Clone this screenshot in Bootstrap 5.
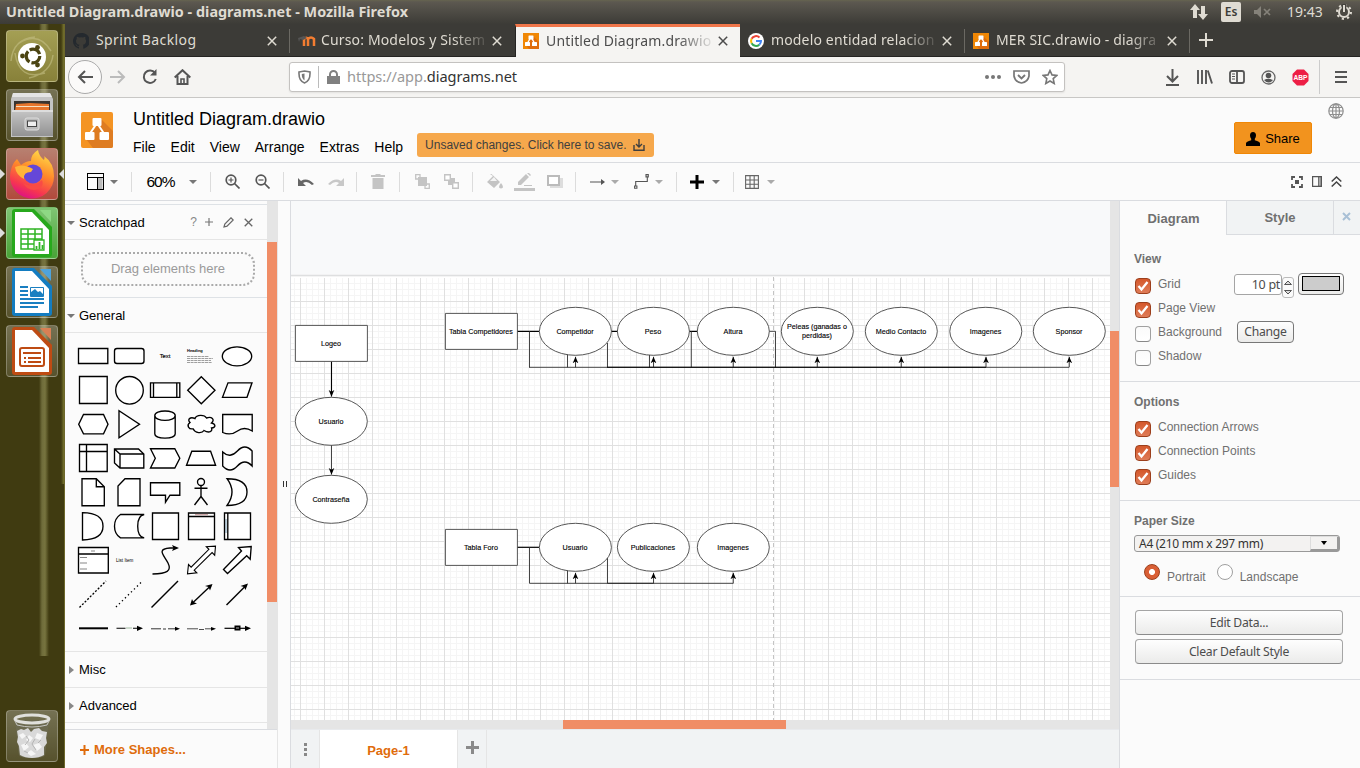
<!DOCTYPE html>
<html lang="es">
<head>
<meta charset="utf-8">
<meta name="viewport" content="width=device-width, initial-scale=1">
<title>Untitled Diagram.drawio - diagrams.net</title>
<link href="https://cdn.jsdelivr.net/npm/bootstrap@5.3.0/dist/css/bootstrap.min.css" rel="stylesheet">
<style>
body{width:1360px;height:768px;font-family:"Liberation Sans",Arial,sans-serif;font-size:13px;line-height:1.2;color:#000;background:#fbfbfb}
svg{display:block;flex:none}
.ub{font-family:"Noto Sans","Open Sans",sans-serif}
/* desktop panel */
.panel{height:24px;background:linear-gradient(#66644f 0,#5c5850 2px,#3f3e39 22px,#3c3b37);color:#dfdbd2;font-size:14px}
.panel-title{font-weight:700;font-size:14.4px;letter-spacing:.01px;padding-left:6px}
.panel-right{grid-template-columns:32px 32px 32px 52px 26px;display:grid;justify-items:center;padding-right:3px}
.lang{width:20px;height:20px;background:#dfdbd2;color:#3c3b37;border-radius:2px;font-size:12px;font-weight:600}
/* launcher */
.dock{width:65px;background:linear-gradient(90deg,transparent 61px,#77742f 64px,#b5ad45 65px) 0 0/65px 460px no-repeat,linear-gradient(90deg,transparent 39px,#6f6c3b 42px,#77743f 45px,transparent 49px) 0 0/65px 632px no-repeat,#403b11;padding:6px 0 6px 6px;border-right:1px solid #6d682b}
.tile{width:52px;height:52px;border-radius:4px;border:1px solid rgba(255,255,255,.25);background:linear-gradient(rgba(255,255,255,.28),rgba(255,255,255,.12));position:relative}
.tile.olive{background:linear-gradient(#a49f54,#88813a)}
.tile.red{background:linear-gradient(#b78070,#b14a3c)}
.tile.green{background:linear-gradient(#7fc573,#49a337)}
.pip{position:absolute;top:20px}
/* browser */
.tabs{height:33px;background:#3c3b37;border-bottom:1px solid #252422;color:#dfdbd2;font-size:14px}
.btab{width:225px;padding:1px 13px 0 8px;position:relative}
.btab .lbl{white-space:nowrap;letter-spacing:.15px;-webkit-mask-image:linear-gradient(90deg,#000 132px,transparent 170px)}
.btab.nomask .lbl{-webkit-mask-image:none;letter-spacing:.4px}
.btab.split{background:linear-gradient(#6b6963,#6b6963) right 5px/1px 24px no-repeat}
.btab.on{background:#f5f4f2;color:#4c4c4c;height:33px;border-top:3px solid #f0764a;border-left:1px solid #252422;padding:0 12px 2px 7px}
.nav-row{height:41px;background:#f5f4f2;border-bottom:1px solid #c8c7c5;display:grid;grid-template-columns:40px 26px 38px 26px 94px 776px 91px 32px 33px 31px 32px 32px 6px 38px;align-items:center;justify-items:center}
.back{width:34px;height:34px;border:1px solid #aaa;border-radius:50%;background:#fbfaf9}
.url{width:776px;height:30px;border:1px solid #c4c2c0;border-radius:3px;background:#fff;font-size:14.6px;letter-spacing:-.05px;color:#999;padding:0 6px 0 8px;box-shadow:0 1px 2px rgba(0,0,0,.08)}
.url b{font-weight:400;color:#333}
.url .sp{width:1px;height:22px;background:#bbb}
/* editor header */
.head{height:65px;border-bottom:1px solid #dadce0}
.doc{font-size:18px;line-height:22px}
.menus{font-size:14px;gap:15px;line-height:24px}
.unsaved{background:#f6a84c;color:#3f3f3f;border-radius:3px;height:24px;font-size:12px;padding:0 9px 0 8px;letter-spacing:0;width:237px}
.share{width:78px;height:32px;background:#f2931e;border:1px solid #f08705;border-radius:2px;font-size:13px;padding-top:2px}
.toolrow{height:38px;border-bottom:1px solid #dadce0;background:#fbfbfb;position:relative}
.tools{display:grid;grid-template-columns:30px 8px 26px 33px 32px 3px 41px 19px 23px 21px 40px 1px 42px 1px 44px 15px 27px 17px 43px 18px 23px 35px 53px 3px 54px 3px 50px;align-items:center;justify-items:center;height:37px;margin-left:15px}
.tools i{width:1px;height:20px;background:#dcdcdc}
.caret{width:0;height:0;border:4px solid transparent;border-top-color:#777;border-bottom:0}
.caret.lt{border-top-color:#aaa}
/* sidebar */
.side{width:213px;border-right:1px solid #e5e5e5}
.shapes{width:202px;border-right:0;margin-top:3px}
.sect{height:35px;font-size:13px;border-bottom:1px solid #e5e5e5;padding:1px 0 0 2px;flex:none}
.sect .tri{width:12px}
.dropzone{width:174px;height:34px;border:2px dotted #aaa;border-radius:12px;color:#9a9a9a;font-size:13px}
.palette{display:grid;grid-template-columns:repeat(5,36px);grid-auto-rows:34px;padding:6px 0 6px 10px;height:319px;border-bottom:1px solid #e5e5e5}
.palette svg{width:36px;height:34px;fill:#fff;stroke:#000;stroke-width:1.35}
.palette .txt{fill:#000;stroke:none}
.vbar{width:10px;background:#e5e5e5}
.vthumb{background:#f08d66}
.more{height:39px;border-top:1px solid #dadce0;color:#df6c0c;font-weight:700;font-size:13px;padding:2px 0 0 15px}
.split-bar{width:12px}
.work{width:829px;border-left:1px solid #dadce0}
.hbar{height:9px;background:#e5e5e5;padding-left:272px}
.pages{height:39px;background:#f1f3f4;border-top:1px solid #e8eaed;color:#df6c0c}
.pages>div{border-right:1px solid #e5e5e5}
/* format panel */
.fmt{width:241px;border-left:1px solid #dadce0;color:#707070;font-size:12px}
.ftab{height:34px;background:#f1f3f4;border-left:1px solid #dadce0;border-bottom:1px solid #dadce0;font-size:13px;font-weight:700}
.ftab.on{background:#fbfbfb;border-color:transparent;padding-top:2px}
.blk{border-bottom:1px solid #dadce0;padding-left:14px}
.blk h6{font-size:12px;font-weight:700;margin:0;height:26px;line-height:26px}
.opt{height:24px;gap:7px;padding-left:1px}
.ck{width:16px;height:16px;border-radius:4px;border:1px solid #a0a0a0;border-bottom-color:#888;background:linear-gradient(#fafafa,#fff);margin-top:4px}
.ck.on{background:linear-gradient(#d4582b,#df7c58);border-color:#9c3f1c}
.gtk{border:1px solid #a5a5a5;border-bottom-color:#8b8b8b;border-radius:4px;background:linear-gradient(#fefefe,#ebebea);color:#4c4c4c;font-size:12.2px;letter-spacing:-.26px;padding:1px 0 0}
.wide{width:208px;height:25px;margin-left:1px}
.num{width:48px;height:21px;background:#fff;border:1px solid #a5a5a5;border-radius:3px;color:#4c4c4c;font-size:12.5px;letter-spacing:-.3px;padding:2px 1px 0 0}
.spin{width:12px;height:21px;border:1px solid #bbb;border-radius:3px;margin-top:7px}
.rad{width:16px;height:16px;border-radius:50%;border:1px solid #a0a0a0;background:#fff}
.rad.on{border-color:#9c3f1c;background:radial-gradient(#fff 2.6px,#d95f35 3.4px)}
.sel{width:206px;height:17px;border:1px solid #999;border-radius:3px;background:#f3f2f1;color:#333;font-size:12px;letter-spacing:-.29px;padding-left:4px}
.sel span:last-child{width:29px;height:15px;border:1px solid #ddd;border-right:2px solid #999;border-bottom:2px solid #999}
</style>
<script src="https://cdn.jsdelivr.net/npm/bootstrap@5.3.0/dist/js/bootstrap.bundle.min.js"></script>
</head>
<body class="overflow-hidden d-flex flex-column">
<svg width="0" height="0" class="position-absolute">
  <defs>
    <symbol id="drawio" viewBox="0 0 32 36"><rect width="32" height="36" rx="2" fill="#f49424"/><path d="M19 6l13 13v15q0 2-2 2H12l-7-9 10-12z" fill="#de7c22"/><path d="M16 11l-8 12M16 11l8 12" stroke="#fff" stroke-width="2"/><rect x="11.500" y="6" width="9" height="8" rx="1" fill="#fff"/><rect x="4" y="20" width="9.500" height="8" rx="1" fill="#fff"/><rect x="18.500" y="20" width="9.500" height="8" rx="1" fill="#fff"/></symbol>
    <symbol id="favdio" viewBox="0 0 16 16"><rect width="16" height="16" fill="#f08705"/><path d="M10 3l6 6v7H6l-3-4 5-6z" fill="#df6c0c"/><path d="M8 4l-4 7M8 4l4 7" stroke="#fff" stroke-width="1.400"/><rect x="5.500" y="2.500" width="5" height="4" rx=".6" fill="#fff"/><rect x="2" y="9" width="5" height="4" rx=".6" fill="#fff"/><rect x="9" y="9" width="5" height="4" rx=".6" fill="#fff"/></symbol>
    <symbol id="x" viewBox="0 0 10 10"><path d="M.8.8l8.400 8.400M9.200.8L.8 9.200" stroke="currentColor" stroke-width="1.500"/></symbol>
    <symbol id="tick" viewBox="0 0 14 14"><path d="M2.500 7l3 3.500 6-7.500" fill="none" stroke="#fff" stroke-width="2.300"/></symbol>
    <marker id="ah" viewBox="0 0 8 8" refX="7.300" refY="4" markerWidth="7" markerHeight="7" markerUnits="userSpaceOnUse" orient="auto"><path d="M0 .8L7.500 4 0 7.200 1.800 4z"/></marker>
  </defs>
</svg>

<header class="panel d-flex align-items-center justify-content-between flex-shrink-0 ub">
  <div class="panel-title text-nowrap">Untitled Diagram.drawio - diagrams.net - Mozilla Firefox</div>
  <div class="panel-right align-items-center">
    <svg width="18" height="18" fill="#dfdbd2"><path d="M5 1l5 6H7v8H3V7H0zM13 17l-5-6h3V3h4v8h3z"/></svg>
    <span class="lang d-flex align-items-center justify-content-center">Es</span>
    <svg width="18" height="12" fill="#85827a"><path d="M0 4h3l4-4v12L3 8H0z"/><path d="M10 3l6 6m0-6l-6 6" stroke="#85827a" stroke-width="1.700"/></svg>
    <span>19:43</span>
    <svg width="16" height="16" viewBox="0 0 16 16" fill="none" stroke="#dfdbd2"><circle cx="8" cy="8" r="5" stroke-width="2"/><circle cx="8" cy="8" r="7" stroke-width="2" stroke-dasharray="2.200 3.300"/><path d="M8 0v8" stroke="#45433e" stroke-width="4.500"/><path d="M8 1v7" stroke-width="2"/></svg>
  </div>
</header>

<div class="d-flex flex-grow-1">
<nav class="dock d-flex flex-column flex-shrink-0">
  <div class="d-flex flex-column" style="gap:7px">
    <div class="tile olive"><svg width="50" height="50" viewBox="0 0 50 50"><path d="M4 30Q6 8 28 6M46 24q-2 18-24 23M12 12q20-12 32 8M38 42Q12 50 8 22" fill="none" stroke="#c4bf86" stroke-opacity=".6" stroke-width="1.500"/><circle cx="25" cy="26" r="14" fill="#fff"/><circle cx="26" cy="25" r="6.800" fill="none" stroke="#4b4412" stroke-width="3.200" stroke-dasharray="12.200 2"/><g fill="#4b4412"><circle cx="15.500" cy="25" r="2.400"/><circle cx="30.500" cy="16.500" r="2.400"/><circle cx="30.500" cy="34" r="2.400"/></g></svg></div>
    <div class="tile"><svg width="50" height="50" viewBox="0 0 50 50"><defs><linearGradient id="cab" x1="0" y1="0" x2="0" y2="1"><stop stop-color="#c6c6c6"/><stop offset="1" stop-color="#929292"/></linearGradient></defs><path d="M6 3h37l3 6v38H4V9z" fill="#c4c4c4"/><path d="M6 3h37l2 4H5z" fill="#e4e4e4"/><path d="M7 11h36v10H7z" fill="#3a3530"/><path d="M9 14l14-1 19 1v7H8z" fill="#e8762c"/><path d="M9 16.500h33" stroke="#f6dfc0"/><path d="M5 20h41v26H5z" fill="url(#cab)"/><path d="M5 20h41v2H5z" fill="#ddd"/><rect x="18" y="28" width="14" height="12" rx="2" fill="#bbb" stroke="#ddd"/><rect x="20.500" y="31" width="9" height="5.500" fill="#eee" stroke="#444"/></svg></div>
    <div class="tile red"><svg width="50" height="50" viewBox="0 0 50 50"><defs><linearGradient id="ff" x1=".8" y1="0" x2=".4" y2="1"><stop stop-color="#ffe14a"/><stop offset=".45" stop-color="#ff8a2a"/><stop offset=".8" stop-color="#f7374f"/><stop offset="1" stop-color="#e01580"/></linearGradient></defs><path d="M10 10l4 6q5-4 10-4 0-7 7-11 1 6 6 10 1-3 0-4 10 7 10 20A22 22 0 1 1 4 21q1-6 6-11z" fill="url(#ff)"/><circle cx="26" cy="25" r="9.500" fill="#6547d8"/><path d="M8 18q8-4 18 2l-2 3q-8 0-7 7-8-4-9-12z" fill="#ffb43a"/><path d="M16 34q10 6 19-3 3 8-8 10-7 0-11-7z" fill="#f94b46"/></svg>
      <svg class="pip" style="left:-7px" width="5" height="10" fill="#ddd"><path d="M0 0l5 5-5 5z"/></svg><svg class="pip" style="left:51px" width="6" height="10" fill="#ddd"><path d="M6 0L1 5l5 5z"/></svg></div>
    <div class="tile green"><svg width="50" height="50" viewBox="0 0 50 50"><path d="M8 1h19l18 18v27q0 3-3 3H8q-3 0-3-3V4q0-3 3-3z" fill="#27a81c"/><path d="M33 2h11v12z" fill="#8ed884"/><path d="M8 4h17l17 18v24H8z" fill="#fff"/><path d="M14 21h21v20H14zM14 26h21M14 31h21M14 36h21M21 21v20M28 21v20" fill="none" stroke="#2fb423" stroke-width="1.500"/><path d="M27 32h10v10H27z" fill="#fff" stroke="#2fb423" stroke-width="1.300"/><path d="M29.500 41v-3m3 3v-7m3 7v-4" stroke="#2fb423" stroke-width="1.800"/></svg>
      <svg class="pip" style="left:-7px" width="5" height="10" fill="#ddd"><path d="M0 0l5 5-5 5z"/></svg></div>
    <div class="tile"><svg width="50" height="50" viewBox="0 0 50 50"><path d="M8 1h19l18 18v27q0 3-3 3H8q-3 0-3-3V4q0-3 3-3z" fill="#137cc0"/><path d="M33 2h11v12z" fill="#4ea3dc"/><path d="M8 4h17l17 18v24H8z" fill="#fff"/><path d="M13 20h8M13 24h8M13 28h8M13 32h24M13 36h24M13 40h18" stroke="#1a7fc1" stroke-width="1.900"/><path d="M23.500 20.500h13v9h-13z" fill="#fff" stroke="#1a7fc1"/><path d="M24 29v-4l4-3 3 3 2-1 3 3v2z" fill="#1a7fc1"/></svg></div>
    <div class="tile"><svg width="50" height="50" viewBox="0 0 50 50"><path d="M8 1h19l18 18v27q0 3-3 3H8q-3 0-3-3V4q0-3 3-3z" fill="#be4b13"/><path d="M33 2h11v12z" fill="#d98054"/><path d="M8 4h17l17 18v24H8z" fill="#fff"/><rect x="13" y="22" width="24" height="18" rx="2" fill="none" stroke="#be4b13" stroke-width="2"/><path d="M16 27h18M17 32h2m2 0h13M17 36h2m2 0h13" stroke="#be4b13" stroke-width="1.800"/></svg></div>
  </div>
  <div class="tile mt-auto"><svg width="50" height="50" viewBox="0 0 50 50"><path d="M8 9l4 35q1 3 13 3t13-3l4-35z" fill="#6c6a50"/><path d="M10 20l4-2 3 1 4-2 3 4 3-3 5-1 3 3 5 1-1 6 1 5-3 4v8q-5 3-12 3t-12-3l-1-9-2-4 1-5z" fill="#d9d9d9"/><path d="M12 24l4-2 3 3-4 3zM22 24l4 3-3 4-4-2zM30 22l6 2-3 5-5-2zM14 34l5-2 3 4-5 4zM26 34l6-2 3 4-5 4zM20 42l4-3 5 4-5 2z" fill="#f6f6f6"/><path d="M19 25l3 4-4 5M28 28l-3 5 4 6M34 29l-3 3M17 40l4 2" fill="none" stroke="#b4b4b4"/><ellipse cx="25" cy="8" rx="17" ry="4" fill="none" stroke="#e0e0dc" stroke-width="3"/><path d="M8 10l2 4q15 4 30 0l2-4" fill="none" stroke="#c4c4c0"/></svg></div>
</nav>

<main class="flex-grow-1 d-flex flex-column">
  <div class="tabs d-flex flex-shrink-0 ub">
    <div class="btab split nomask d-flex align-items-center"><svg width="16" height="16" viewBox="0 0 16 16" fill="#24292e"><path d="M8 0a8 8 0 0 0-2.500 15.600c.4 0 .5-.2.500-.4v-1.500c-2 .4-2.700-1-2.900-1.400-.4-.7-1-.9-.4-1 .8 0 1.300 1.200 1.600 1.400.6.500 1.200.3 1.700.1l.5-1C4.300 11.500 3 10.500 3 8c0-1 .3-1.500.8-2.100-.2-.6-.2-1.400.1-2.200.8 0 1.500.4 2.200.9a8 8 0 0 1 4 0c.7-.5 1.300-.9 2.100-.9.300.8.300 1.600.1 2.200.5.600.8 1.200.8 2.100 0 2.500-1.500 3.500-3.300 3.700.3.200.5.700.5 1.400v2.200c0 .2.100.4.500.4A8 8 0 0 0 8 0z"/></svg><span class="lbl flex-grow-1" style="margin-left:7px">Sprint Backlog</span><svg class="ms-1" width="10" height="10"><use href="#x"/></svg></div>
    <div class="btab d-flex align-items-center"><svg width="18" height="16" viewBox="0 0 18 16"><path d="M6 13V6q2.500-2.500 4 0v7m0-7q3-3 6 0v7" fill="none" stroke="#f47d31" stroke-width="2.500"/><path d="M0 5l6-2 3 2-4 2-3-1-1 3z" fill="#555"/></svg><span class="lbl flex-grow-1" style="margin-left:5px">Curso: Modelos y Sistem</span><svg class="ms-1" width="10" height="10"><use href="#x"/></svg></div>
    <div class="btab on d-flex align-items-center"><svg width="16" height="16"><use href="#favdio"/></svg><span class="lbl flex-grow-1" style="margin-left:7px">Untitled Diagram.drawio</span><svg class="ms-1" width="10" height="10"><use href="#x"/></svg></div>
    <div class="btab split d-flex align-items-center"><svg width="16" height="16" viewBox="0 0 16 16"><circle cx="8" cy="8" r="8" fill="#fff"/><g fill="none" stroke-width="2"><path d="M11.500 4.500A5 5 0 0 0 3.600 5.800" stroke="#ea4335"/><path d="M3.600 5.800a5 5 0 0 0 0 4.500" stroke="#fbbc05"/><path d="M3.600 10.300a5 5 0 0 0 7.700 1.400" stroke="#34a853"/><path d="M11.300 11.700A5 5 0 0 0 13 8H8" stroke="#4285f4"/></g></svg><span class="lbl flex-grow-1" style="margin-left:7px">modelo entidad relacion</span><svg class="ms-1" width="10" height="10"><use href="#x"/></svg></div>
    <div class="btab split d-flex align-items-center"><svg width="16" height="16"><use href="#favdio"/></svg><span class="lbl flex-grow-1" style="margin-left:7px">MER SIC.drawio - diagra</span><svg class="ms-1" width="10" height="10"><use href="#x"/></svg></div>
    <svg class="mt-2" style="margin-left:9px" width="14" height="15" stroke="#dfdbd2" stroke-width="2"><path d="M0 8h14M7 1v14"/></svg>
  </div>

  <div class="nav-row flex-shrink-0">
    <div class="back d-flex align-items-center justify-content-center"><svg width="16" height="14" fill="none" stroke="#555" stroke-width="2"><path d="M16 7H2M8 1L2 7l6 6"/></svg></div>
    <svg width="16" height="14" fill="none" stroke="#bbb" stroke-width="2"><path d="M0 7h14M8 1l6 6-6 6"/></svg>
    <svg width="16" height="16" fill="none" stroke="#555" stroke-width="2"><path d="M13.800 10A6.200 6.200 0 1 1 13 4"/><path d="M14.500 0v6.500H8z" fill="#555" stroke="none"/></svg>
    <svg width="17" height="16" fill="none" stroke="#555" stroke-width="2"><path d="M.7 8.500l7.800-7.300 7.800 7.300M3.500 7v8h10V7"/><path d="M7 15v-5h3v5" stroke-width="1.600"/></svg>
    <span></span>
    <div class="url ub d-flex align-items-center">
      <svg width="13" height="14" fill="none" stroke="#777" stroke-width="1.600"><path d="M1 2l5.500-1L12 2q.5 9-5.500 11Q.5 11 1 2z"/><path d="M6.500 3.500v7Q3.500 8 3.800 4z" fill="#777" stroke="none"/></svg>
      <span class="sp" style="margin-left:7px"></span>
      <svg style="margin-left:8px" width="13" height="14" fill="#808080"><path d="M0 6h13v8H0z"/><path d="M3 7V4.500a3.500 3.500 0 0 1 7 0V7" fill="none" stroke="#808080" stroke-width="2"/></svg>
      <span class="flex-grow-1" style="margin-left:7px">https://app.<b>diagrams.net</b></span>
      <svg width="16" height="4" fill="#777"><circle cx="2" cy="2" r="2"/><circle cx="8" cy="2" r="2"/><circle cx="14" cy="2" r="2"/></svg>
      <svg style="margin-left:12px" width="17" height="14" fill="none" stroke="#777" stroke-width="1.700"><path d="M1 1h15v5q-1 6-7.500 7Q2 12 1 6z"/><path d="M5 5l3.500 3.500L12 5" stroke-width="1.900"/></svg>
      <svg style="margin-left:12px" width="16" height="16" fill="none" stroke="#777" stroke-width="1.600"><path d="M8 1.500l2 4.400 4.800.5-3.600 3.200 1 4.900L8 12l-4.200 2.500 1-4.900L1.200 6.400 6 5.900z"/></svg>
    </div>
    <span></span>
    <svg width="13" height="17" fill="none" stroke="#555" stroke-width="2"><path d="M6.500 0v12M1 7l5.500 5.500L12 7M0 16h13"/></svg>
    <svg width="16" height="14" stroke="#555" stroke-width="1.900"><path d="M1 0v14M5 0v14M9 0v14M10.800.5L15 13.500"/></svg>
    <svg width="16" height="14" fill="none" stroke="#555" stroke-width="1.800"><rect x="1" y="1" width="14" height="12" rx="2"/><path d="M8 1v12"/><path d="M3 4h3M3 6.500h3M3 9h3" stroke-width="1"/></svg>
    <svg width="15" height="15" fill="#555"><circle cx="7.500" cy="7.500" r="6.500" fill="none" stroke="#666" stroke-width="1.300"/><circle cx="7.500" cy="5.500" r="2.800"/><path d="M3 10q4.500-2.500 9 0-4.500 5-9 0z"/></svg>
    <svg width="17" height="17" viewBox="0 0 17 17"><path d="M5 .5h7l4.500 4.500v7L12 16.500H5L.5 12V5z" fill="#ed1e45"/><text x="8.500" y="11.300" font-size="7.500" font-weight="700" fill="#fff" text-anchor="middle" textLength="14" lengthAdjust="spacingAndGlyphs">ABP</text></svg>
    <span style="width:1px;height:34px;background:#ccc"></span>
    <svg width="12" height="12" stroke="#555" stroke-width="2"><path d="M0 1h12M0 6h12M0 11h12"/></svg>
  </div>

  <div class="head d-flex flex-shrink-0">
    <svg style="margin:14px 20px 0 16px" width="32" height="36"><use href="#drawio"/></svg>
    <div>
      <div class="doc" style="padding-top:10px">Untitled Diagram.drawio</div>
      <div class="d-flex align-items-center menus" style="margin-top:5px"><span>File</span><span>Edit</span><span>View</span><span>Arrange</span><span>Extras</span><span>Help</span>
        <span class="unsaved d-flex align-items-center justify-content-between" style="margin-left:-1px;margin-top:-4px">Unsaved changes. Click here to save.<svg width="12" height="12" fill="none" stroke="#3f3f3f" stroke-width="1.400"><path d="M1 6v5.300h10V6M6 0v8M3 5l3 3 3-3"/></svg></span></div>
    </div>
    <div class="share ms-auto d-flex align-items-center justify-content-center" style="margin-top:24px;gap:5px"><svg width="14" height="14"><path d="M7 0q3 0 3 3.500 0 2-1.200 3.200v1.500q5.200 1.500 5.200 3V14H0v-2.800q0-1.500 5.200-3V6.700Q4 5.500 4 3.500 4 0 7 0z"/></svg>Share</div>
    <svg style="margin:5px 16px 0" width="16" height="16" fill="none" stroke="#8f8f8f" stroke-width="1.200"><circle cx="8" cy="8" r="7.200"/><ellipse cx="8" cy="8" rx="3.500" ry="7.200"/><path d="M8 1v14M1 8h14M2 4.500h12M2 11.500h12"/></svg>
  </div>

  <div class="toolrow d-flex flex-shrink-0">
    <div class="tools">
      <svg width="18" height="17" fill="none" stroke="#000"><path d="M11.500 5h5v11h-5z" fill="#bbb" stroke="none"/><rect x="1.500" y=".5" width="16" height="16"/><path d="M1 4.500h17M11.500 4.500V17"/></svg>
      <b class="caret"></b><i></i><span style="font-size:15.500px;letter-spacing:-1px;padding-top:1px">60%</span><b class="caret"></b><i></i>
      <svg width="15" height="15" fill="none" stroke="#555" stroke-width="1.700"><circle cx="6" cy="6" r="4.800"/><path d="M9.500 9.500l5 5"/><path d="M3.500 6h5M6 3.500v5" stroke-width="1.200"/></svg>
      <svg width="15" height="15" fill="none" stroke="#555" stroke-width="1.700"><circle cx="6" cy="6" r="4.800"/><path d="M9.500 9.500l5 5"/><path d="M3.500 6h5" stroke-width="1.200"/></svg><i></i>
      <svg width="16" height="8" fill="#666"><path d="M0 0l3 3q6-4 13 3l-2 1Q9 2 5 5l3 3H0z"/></svg>
      <svg width="16" height="8" fill="#c8c8c8"><path d="M16 0l-3 3Q7-1 0 6l2 1q5-5 9-2L8 8h8z"/></svg><i></i>
      <svg width="14" height="15" fill="#c4c4c4"><path d="M0 1h4l1-1h4l1 1h4v2H0zM1.500 4h11v11h-11z"/></svg><i></i>
      <svg width="15" height="15" fill="none" stroke="#c4c4c4" stroke-width="1.300"><path d="M5 .7H.7V5H5zM10 10h4.300v4.300H10V10"/><path d="M3 3h9v9H3z" fill="#c4c4c4" stroke="none"/></svg>
      <svg width="15" height="15" fill="none" stroke="#c4c4c4" stroke-width="1.400"><path d="M4 4h7v7H4z" fill="#c4c4c4" stroke="none"/><path d="M.7.7h5.600v5.600H.7zM8.700 8.700h5.600v5.600H8.700z" fill="#fff"/></svg><i></i>
      <svg width="17" height="15" fill="#c4c4c4"><path d="M1 8l6-6-3-2 1-.5L14 8l-6 6z"/><path d="M4 7l4-4 3 4z" fill="#f4f4f4"/><path d="M15 9q4 5 0 5.500-4-.5 0-5.500z"/></svg>
      <svg width="21" height="18" fill="#c4c4c4"><path d="M0 15h21v3H0zM4 12v-3l8-8 3 3-8 8zM13 0l3 3 1-1-3-3zM10 12h8v1h-8z"/></svg>
      <svg width="16" height="13"><path d="M3 3h13v10H3z" fill="#ddd"/><path d="M1 1h11v9H1z" fill="#fff" stroke="#bbb" stroke-width="2"/></svg><i></i>
      <span class="d-flex align-items-center" style="gap:6px"><svg width="15" height="6" fill="#555"><path d="M0 2.500h11V0l4 3-4 3V3.500H0z"/></svg><b class="caret lt"></b></span>
      <span class="d-flex align-items-center" style="gap:6px"><svg width="15" height="15" fill="none" stroke="#555" stroke-width="1.100"><path d="M1.700 12V7.500h11.600V3"/><path d="M.6 12h2.300v2.300H.6zM12 .6h2.300v2.300H12z"/></svg><b class="caret lt"></b></span><i></i>
      <span class="d-flex align-items-center" style="gap:8px"><svg width="14" height="14" stroke="#000" stroke-width="3"><path d="M0 7h14M7 0v14"/></svg><b class="caret"></b></span><i></i>
      <span class="d-flex align-items-center" style="gap:8px"><svg width="14" height="14" fill="none" stroke="#666" stroke-width="1.100"><path d="M.6.600h12.800v12.800H.6zM.6 5h12.800M.6 9.200h12.800M5 .6v12.800M9.200.6v12.800"/></svg><b class="caret lt"></b></span>
    </div>
    <div class="ms-auto d-flex align-items-center" style="gap:9px;padding-right:18px">
      <svg width="12" height="12" fill="none" stroke="#555" stroke-width="1.800"><path d="M1 4V1h3M8 1h3v3M11 8v3H8M4 11H1V8"/><path d="M4 4h4v4H4z" fill="#555" stroke="none"/></svg>
      <svg width="10" height="11" fill="none" stroke="#555" stroke-width="1.200"><path d="M6.500 .6h2.900v9.800H6.500z" fill="#aaa" stroke-width=".8"/><path d="M.6.600h8.800v9.800H.6z"/></svg>
      <svg width="11" height="11" fill="none" stroke="#444" stroke-width="1.500"><path d="M.7 5.500l4.800-4.500 4.800 4.500M.7 10.500L5.500 6l4.800 4.500"/></svg>
    </div>
  </div>

  <div class="d-flex flex-grow-1">
    <aside class="side d-flex flex-column flex-shrink-0">
      <div class="d-flex flex-grow-1">
        <div class="shapes d-flex flex-column">
          <div class="sect d-flex align-items-center border-top" style="height:36px"><span class="tri"><b class="caret d-block"></b></span><span>Scratchpad</span>
            <span class="ms-auto d-flex align-items-center" style="gap:8px;padding-right:14px;color:#666"><span style="font-size:12px;color:#888">?</span><svg width="8" height="8" stroke="#777" stroke-width="1.200"><path d="M0 4h8M4 0v8"/></svg><svg width="11" height="11" fill="none" stroke="#666" stroke-width="1.200" style="margin-left:2px"><path d="M1 10l.8-3L8 .8 10.200 3 4 9.200z"/></svg><svg width="9" height="9" style="margin-left:2px"><use href="#x"/></svg></span></div>
          <div class="border-bottom d-flex align-items-center" style="height:58px;padding-left:16px"><div class="dropzone d-flex align-items-center justify-content-center">Drag elements here</div></div>
          <div class="sect d-flex align-items-center"><span class="tri"><b class="caret d-block"></b></span><span>General</span></div>
          <div class="palette">
            <svg><path d="M3.500 9.500h29.300v15H3.500z"/></svg>
            <svg><rect x="3.500" y="9.500" width="29.500" height="15" rx="2.500"/></svg>
            <svg class="txt"><text x="18" y="19" font-size="5.800" text-anchor="middle" stroke="#000" stroke-width=".15">Text</text></svg>
            <svg class="txt"><text x="4" y="13" font-size="4" font-weight="700">Heading</text><path d="M4 17.500h22M4 19.500h26M4 21.500h24M4 23.500h25" stroke="#777" stroke-width=".7" stroke-dasharray="3 .6"/></svg>
            <svg><ellipse cx="18" cy="17.300" rx="14.700" ry="9.500"/></svg>

            <svg><path d="M4.500 3.500h27.700v27H4.500z"/></svg>
            <svg><circle cx="18.500" cy="17.300" r="13.800"/></svg>
            <svg><path d="M3.500 9.800h29.300v14.500H3.500zM6.500 9.800v14.500M29.800 9.800v14.500"/></svg>
            <svg><path d="M18.300 3.700l13.700 13.600-13.700 13.500L4.700 17.300z"/></svg>
            <svg><path d="M9 9.800h24l-5 14.500H3.500z"/></svg>

            <svg><path d="M8.500 7.500h20l4.500 9.700-4.500 9.700h-20L3.700 17.200z"/></svg>
            <svg><path d="M8 3.800v27l20.500-13.500z"/></svg>
            <svg><path d="M7.800 8.500v18.500c0 5.500 20.400 5.500 20.400 0V8.500c0-6-20.400-6-20.400 0 0 6.500 20.400 6.500 20.400 0"/></svg>
            <svg><path d="M12 11.500c-5-2-8 1-5 4-4 3-1 7 3 6.300 2 4.500 9 5 11 1.700 5 3 9 1 7.500-2.500 5-.5 4-4 0-5 4-3.500 0-7-5-5-2-3.500-10-3.500-11.500.5z"/></svg>
            <svg><path d="M3.700 7.500h29.500v16.500q-8-5-14.700 0t-14.800 1.500z"/></svg>

            <svg><path d="M4.500 3.500h27.700v27H4.500zM4.500 10.500h27.700M11.500 3.500v27"/></svg>
            <svg><path d="M3.500 8h24l5.300 5v14H9l-5.500-5zM3.500 8L9 13h23.800M9 13v14"/></svg>
            <svg><path d="M3.500 7.700h24.300l5 9.500-5 9.800H3.500l4.800-9.800z"/></svg>
            <svg><path d="M8.800 10.200h18.800l5 14H3.500z"/></svg>
            <svg><path d="M3.700 11q7.300 7 14.700-1t14.700 0v15q-7.300-8-14.700 0t-14.700 0z"/></svg>

            <svg><path d="M7 3.700h14.300l8 8v19H7zM21.300 3.700v8h8"/></svg>
            <svg><path d="M14 3.700h15v27H7V11z"/></svg>
            <svg><path d="M3.500 7.700h29.300v12.500H23l-4.500 7v-7h-15z"/></svg>
            <svg><circle cx="18" cy="7" r="3.500"/><path d="M18 10.500v11M11.500 13.200h13M18 21.500L11.500 30M18 21.500l6.500 8.500" fill="none"/></svg>
            <svg><path d="M8 3.700q20 0 20 13.300T8 30.500q10-13.500 0-26.800z"/></svg>

            <svg><path d="M7.500 3.700Q28 4 28 17.200T7.500 31z"/></svg>
            <svg><path d="M9.500 5.500h23.700q-6.500 1-6.500 11.700 0 10.700 6.500 11.700H9.500Q3.500 25 3.500 17.200T9.500 5.500z"/></svg>
            <svg><path d="M5.500 4h26v26.500h-26z"/></svg>
            <svg><path d="M5.500 4h26v26.500h-26zM5.500 7.500h26"/><path d="M12 5.700h13" stroke-width=".7" stroke="#a66"/></svg>
            <svg><path d="M5.500 4h26v26.500h-26zM8.800 4v26.500"/><path d="M7 10v14" stroke-width=".7" stroke="#479"/></svg>

            <svg><path d="M3.500 4.500h29.800V30H3.500zM3.500 11h29.800"/><path d="M16 8h4M5 14.500h7M5 20h7M5 26h7" stroke-width=".7" stroke="#555"/></svg>
            <svg class="txt"><text x="5" y="18.500" font-size="4.600">List Item</text></svg>
            <svg><path d="M5.500 31C20 30.500 25 28 21 20s-12-14 2-15h6" fill="none"/><path d="M25 2l7 3-7 3 1.500-3z" fill="#000" stroke="none"/></svg>
            <svg stroke-linejoin="miter"><path stroke-width="1.100" d="M4.500 30.800l1-9.300 2.600 2.600L25.900 6.300l-2.600-2.600 9.200-.5-.8 9-2.600-2.600L11.200 27.200l2.600 2.600z"/></svg>
            <svg><path d="M4.500 26.500L22.500 8l-3-3.500 12.700-1-1 12.700-3.500-3.500L8.500 30.500z"/></svg>

            <svg><path d="M4.500 30.500L31 4" stroke-dasharray="2 1.700"/></svg>
            <svg><path d="M5 30L30 5.500" stroke-dasharray="1.300 2.900"/></svg>
            <svg><path d="M4.500 30.500L31 4"/></svg>
            <svg><path d="M9 26.500L28 8.500"/><path d="M7 28.500l2-6.500 1.500 3 3.500 1.500zM29.500 7L27 13.500l-1.500-3.500-3.500-1z" fill="#000" stroke="none"/></svg>
            <svg><path d="M7.500 28L27 8.500"/><path d="M29 6.500L26.500 13 25 10l-3.500-1z" fill="#000" stroke="none"/></svg>

            <svg><path d="M4 17.300h29" stroke-width="2"/></svg>
            <svg><path d="M5.500 17.300h9M22 17.300h6" stroke-width="1.100"/><path d="M15 17h6" stroke="#8a8" stroke-width=".8"/><path d="M26 14.700l6 2.600-6 2.600z" fill="#000" stroke="none"/></svg>
            <svg><path d="M4 17.800h10M21 17.800h8M16 18h3" stroke-width=".8"/><path d="M28 15.800l5 2-5 2z" fill="#000" stroke="none"/></svg>
            <svg><path d="M4 17.800h11M16 18.500h5M22 17.800h8" stroke-width=".7"/><path d="M28 16l5 1.800-5 2z" fill="#000" stroke="none"/></svg>
            <svg><path d="M5.500 17.300h23" stroke-width="1.200"/><path d="M26 14.700l6 2.600-6 2.600zM15.500 14.500h6v5h-6z" fill="#000" stroke="none"/><path d="M17 17h3" stroke="#fff" stroke-width=".7"/></svg>
          </div>
          <div class="sect d-flex align-items-center" style="height:36px"><span class="tri"><svg width="5" height="8" fill="#888" style="margin-left:2px"><path d="M0 0l5 4-5 4z"/></svg></span><span>Misc</span></div>
          <div class="sect d-flex align-items-center"><span class="tri"><svg width="5" height="8" fill="#888" style="margin-left:2px"><path d="M0 0l5 4-5 4z"/></svg></span><span>Advanced</span></div>
        </div>
        <div class="vbar"><div class="vthumb" style="height:360px;margin-top:41px"></div></div>
      </div>
      <div class="more d-flex align-items-center"><svg width="9" height="10" stroke="#df6c0c" stroke-width="2" style="margin-right:5px"><path d="M0 5h9M4.500 0v10"/></svg>More Shapes...</div>
    </aside>
    <div class="split-bar d-flex align-items-center justify-content-center flex-shrink-0"><svg width="4" height="7" stroke="#333" style="margin-left:1px"><path d="M.5 0v6M3.500 0v6"/></svg></div>

    <section class="work d-flex flex-column flex-shrink-0">
      <div class="d-flex flex-grow-1">
        <svg width="819" height="519" viewBox="291 201 819 519" font-family="Liberation Sans" font-size="7.200" text-anchor="middle">
          <defs>
            <pattern id="grid" x="300" y="301" width="24" height="24" patternUnits="userSpaceOnUse"><path d="M6.500 0v24M12.500 0v24M18.500 0v24M0 6.500h24M0 12.500h24M0 18.500h24" stroke="#f5f5f5"/><path d="M.5 0v24M0 .5h24" stroke="#e0e0e0"/></pattern>
          </defs>
          <path d="M291 201h819v74H291z" fill="#f8f9fa"/><path d="M291 277h819v443H291z" fill="#fff"/><path d="M291 278h819v442H291z" fill="url(#grid)"/>
          <path d="M291 275.500h819" stroke="#dedfe0" stroke-width="1.500"/>
          <path d="M773.500 277v443" stroke="#c4c4c4" stroke-dasharray="4 3"/>
          <g fill="none" stroke="#222" stroke-width=".85">
            <path d="M331.500 361v35.500" stroke-width="1.100" stroke="#000" marker-end="url(#ah)"/><path d="M331.500 445v29.500" marker-end="url(#ah)"/>
            <path d="M517 331.300h22M611 331.300h7M689 331.300h9" stroke="#000" stroke-width="1.200"/><path d="M769 331.300h6.500v36M529.500 331v36.300M567.500 354v13.300M607.500 343v24.300M649.500 354v13.300M691.300 331v36.300M529 367.300h540"/>
            <path d="M607 367.300h379" stroke="#000" stroke-width="1.100"/>
            <path d="M575.500 367.300v-10.500" marker-end="url(#ah)"/><path d="M653.500 367.300v-10.500" marker-end="url(#ah)"/><path d="M733.300 367.300v-10.500" marker-end="url(#ah)"/><path d="M817.300 367.300v-10.500" marker-end="url(#ah)"/><path d="M901.300 367.300v-10.500" marker-end="url(#ah)"/><path d="M986 367.300v-10.500" marker-end="url(#ah)"/><path d="M1069.300 367.300v-10.500" marker-end="url(#ah)"/>
            <path d="M517 547.300h22" stroke="#000" stroke-width="1.200"/><path d="M529.500 547v36.300h203.800M567.500 570v13.300M607.500 558v25.300h46"/>
            <path d="M575.500 583.300v-10.500" marker-end="url(#ah)"/><path d="M653.500 583.300v-10.500" marker-end="url(#ah)"/><path d="M733.300 583.300v-10.500" marker-end="url(#ah)"/>
          </g>
          <g fill="#fff" stroke="#444" stroke-width=".9">
            <path d="M295.400 325.400h72v36h-72zM445.400 313.400h72v36h-72zM445.400 529.400h72v36h-72z"/>
            <ellipse cx="331.300" cy="421.300" rx="36" ry="24"/><ellipse cx="331.300" cy="499.300" rx="36" ry="24"/>
            <ellipse cx="575.400" cy="331.300" rx="36" ry="24"/><ellipse cx="653.400" cy="331.300" rx="36" ry="24"/><ellipse cx="733.300" cy="331.300" rx="36" ry="24"/><ellipse cx="817.300" cy="331.300" rx="36" ry="24"/><ellipse cx="901.300" cy="331.300" rx="36" ry="24"/><ellipse cx="985.800" cy="331.300" rx="36" ry="24"/><ellipse cx="1069.300" cy="331.300" rx="36" ry="24"/>
            <ellipse cx="575.400" cy="547.300" rx="36" ry="24"/><ellipse cx="653.400" cy="547.300" rx="36" ry="24"/><ellipse cx="733.300" cy="547.300" rx="36" ry="24"/>
          </g>
          <g fill="#000" stroke="#000" stroke-width=".12">
            <text x="331" y="346">Logeo</text><text x="331" y="424">Usuario</text><text x="331" y="502">Contraseña</text>
            <text x="481" y="334">Tabla Competidores</text><text x="575" y="334">Competidor</text><text x="653" y="334">Peso</text><text x="733" y="334">Altura</text><text x="817" y="329">Peleas (ganadas o</text><text x="817" y="338">perdidas)</text><text x="901" y="334">Medio Contacto</text><text x="985.500" y="334">Imagenes</text><text x="1069" y="334">Sponsor</text>
            <text x="481" y="550">Tabla Foro</text><text x="575" y="550">Usuario</text><text x="653" y="550">Publicaciones</text><text x="733" y="550">Imagenes</text>
          </g>
        </svg>
        <div class="vbar flex-grow-1"><div class="vthumb" style="height:156px;margin-top:130px"></div></div>
      </div>
      <div class="hbar"><div class="vthumb" style="width:223px;height:9px"></div></div>
      <div class="pages d-flex">
        <div class="d-flex align-items-center justify-content-center" style="width:29px"><svg width="3" height="13" fill="#888"><path d="M0 0h3v3H0zM0 5h3v3H0zM0 10h3v3H0z"/></svg></div>
        <div class="bg-white d-flex align-items-center justify-content-center fw-bold" style="width:138px;padding-top:4px">Page-1</div>
        <div class="d-flex align-items-center justify-content-center" style="width:29px"><svg width="13" height="13" stroke="#8a8a8a" stroke-width="3" style="margin-top:-3px"><path d="M0 6.500h13M6.500 0v13"/></svg></div>
      </div>
    </section>

    <aside class="fmt flex-shrink-0">
      <div class="d-flex">
        <div class="ftab on d-flex align-items-center justify-content-center" style="width:106px">Diagram</div>
        <div class="ftab d-flex align-items-center justify-content-center" style="width:107px">Style</div>
        <div class="ftab flex-grow-1 d-flex justify-content-center" style="padding:11px 1px 0 0"><svg width="9" height="9" stroke="#a9c0d6" stroke-width="2"><path d="M1 1l7 7M8 1L1 8"/></svg></div>
      </div>
      <div class="blk" style="height:147px;padding-top:11px">
        <h6>View</h6>
        <div class="opt d-flex align-items-center"><span class="ck on"><svg width="14" height="14"><use href="#tick"/></svg></span>Grid
          <span class="num ub text-end ms-auto">10 pt</span><span class="spin d-flex flex-column justify-content-around align-items-center" style="margin-left:-7px"><svg width="8" height="5" fill="#ddd" stroke="#555"><path d="M.5 4.500h7L4 1z"/></svg><svg width="8" height="5" fill="#ddd" stroke="#555"><path d="M.5.5h7L4 4z"/></svg></span><span class="gtk d-flex align-items-center justify-content-center" style="width:46px;height:22px;margin:-1px 16px 0 -3px;padding:0;border-color:#777"><span style="width:38px;height:15px;background:#ccc;border:1px solid #000"></span></span></div>
        <div class="opt d-flex align-items-center"><span class="ck on"><svg width="14" height="14"><use href="#tick"/></svg></span>Page View</div>
        <div class="opt d-flex align-items-center"><span class="ck"></span><span style="padding-top:1px">Background</span><button class="btn gtk ub ms-auto" style="width:57px;height:22px;margin-right:66px;border-color:#777;line-height:1">Change</button></div>
        <div class="opt d-flex align-items-center"><span class="ck"></span>Shadow</div>
      </div>
      <div class="blk" style="height:119px;padding-top:7px">
        <h6>Options</h6>
        <div class="opt d-flex align-items-center"><span class="ck on"><svg width="14" height="14"><use href="#tick"/></svg></span>Connection Arrows</div>
        <div class="opt d-flex align-items-center"><span class="ck on"><svg width="14" height="14"><use href="#tick"/></svg></span>Connection Points</div>
        <div class="opt d-flex align-items-center"><span class="ck on"><svg width="14" height="14"><use href="#tick"/></svg></span>Guides</div>
      </div>
      <div class="blk" style="height:96px;padding-top:7px">
        <h6>Paper Size</h6>
        <div class="sel ub d-flex align-items-center justify-content-between" style="margin-top:1px"><span style="padding-top:1px">A4 (210 mm x 297 mm)</span><span class="d-flex align-items-center justify-content-center"><b class="caret" style="border-width:4px 3px 0;border-top-color:#000"></b></span></div>
        <div class="d-flex" style="padding:12px 0 0 10px"><span class="rad on"></span><span style="margin:6px 11px 0 7px">Portrait</span><span class="rad"></span><span style="margin:6px 0 0 7px">Landscape</span></div>
      </div>
      <div class="blk d-flex flex-column" style="height:83px;padding-top:13px;gap:4px">
        <button class="btn gtk wide ub">Edit Data...</button>
        <button class="btn gtk wide ub">Clear Default Style</button>
      </div>
    </aside>
  </div>
</main>
</div>
</body>
</html>
